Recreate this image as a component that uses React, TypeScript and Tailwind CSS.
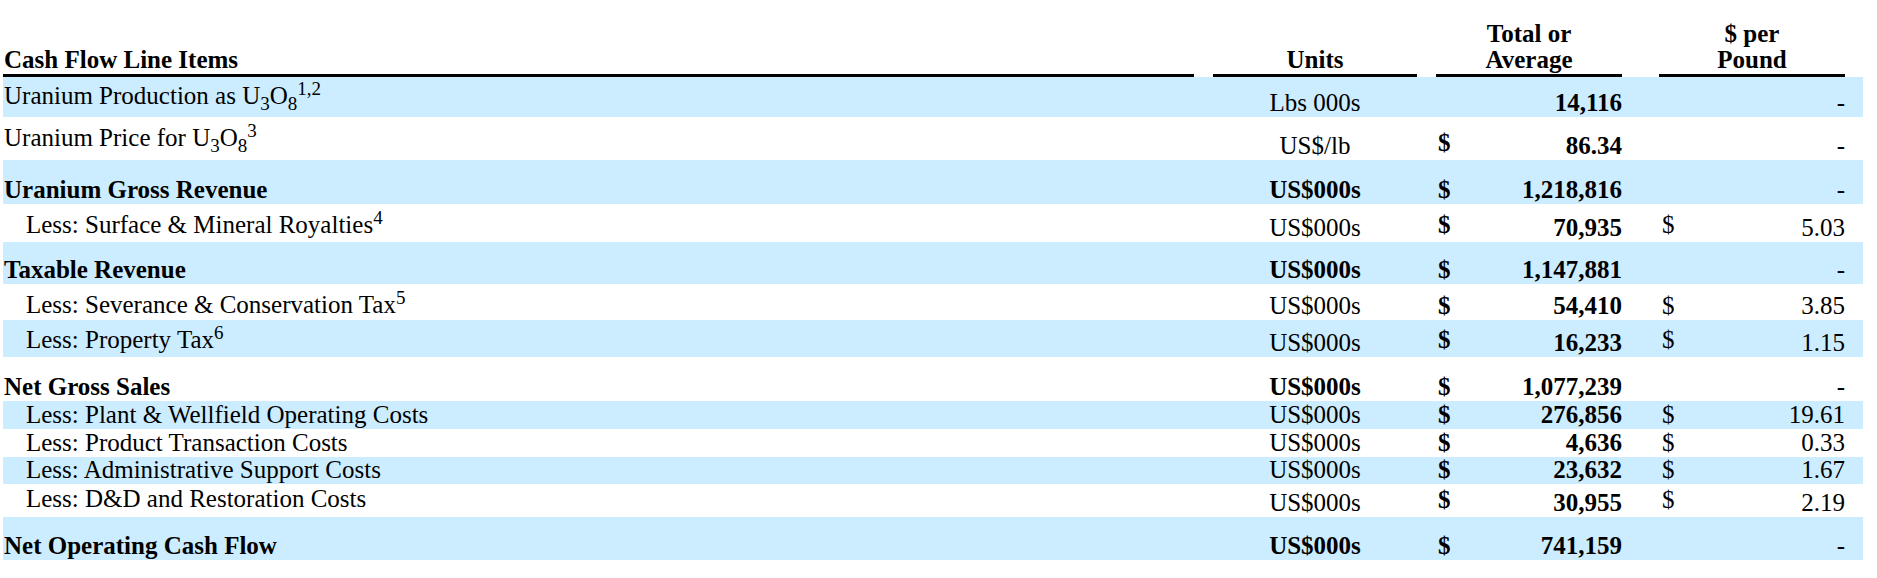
import type { ReactNode } from "react";

type Row = {
  label: ReactNode;
  units: string;
  total: string;
  dollar?: boolean;
  per: string;
  perDollar?: boolean;
  bold?: boolean;
  indent?: boolean;
  blue: boolean;
  h: string;
  lpb?: string;
  dpb?: string;
};

const Sub = ({ children }: { children: ReactNode }) => (
  <span className="relative top-[6px] text-[19px] leading-none">{children}</span>
);
const Sup = ({ children }: { children: ReactNode }) => (
  <span className="relative -top-[9px] text-[19px] leading-none">{children}</span>
);

const rows: Row[] = [
  {
    label: (
      <>
        Uranium Production as U<Sub>3</Sub>O<Sub>8</Sub>
        <Sup>1,2</Sup>
      </>
    ),
    units: "Lbs 000s",
    total: "14,116",
    per: "-",
    blue: true,
    h: "h-[40px]",
    lpb: "pb-[7px]",
  },
  {
    label: (
      <>
        Uranium Price for U<Sub>3</Sub>O<Sub>8</Sub>
        <Sup>3</Sup>
      </>
    ),
    units: "US$/lb",
    total: "86.34",
    dollar: true,
    per: "-",
    blue: false,
    h: "h-[43px]",
    lpb: "pb-[8px]",
    dpb: "pb-[3px]",
  },
  { label: "Uranium Gross Revenue", units: "US$000s", total: "1,218,816", dollar: true, per: "-", bold: true, blue: true, h: "h-[44px]" },
  {
    label: (
      <>
        Less: Surface &amp; Mineral Royalties<Sup>4</Sup>
      </>
    ),
    units: "US$000s",
    total: "70,935",
    dollar: true,
    per: "5.03",
    perDollar: true,
    indent: true,
    blue: false,
    h: "h-[38px]",
    lpb: "pb-[3px]",
    dpb: "pb-[3px]",
  },
  { label: "Taxable Revenue", units: "US$000s", total: "1,147,881", dollar: true, per: "-", bold: true, blue: true, h: "h-[42px]" },
  {
    label: (
      <>
        Less: Severance &amp; Conservation Tax<Sup>5</Sup>
      </>
    ),
    units: "US$000s",
    total: "54,410",
    dollar: true,
    per: "3.85",
    perDollar: true,
    indent: true,
    blue: false,
    h: "h-[36px]",
    lpb: "pb-[1px]",
  },
  {
    label: (
      <>
        Less: Property Tax<Sup>6</Sup>
      </>
    ),
    units: "US$000s",
    total: "16,233",
    dollar: true,
    per: "1.15",
    perDollar: true,
    indent: true,
    blue: true,
    h: "h-[37px]",
    lpb: "pb-[3px]",
    dpb: "pb-[3px]",
  },
  { label: "Net Gross Sales", units: "US$000s", total: "1,077,239", dollar: true, per: "-", bold: true, blue: false, h: "h-[44px]" },
  { label: "Less: Plant & Wellfield Operating Costs", units: "US$000s", total: "276,856", dollar: true, per: "19.61", perDollar: true, indent: true, blue: true, h: "h-[28px]" },
  { label: "Less: Product Transaction Costs", units: "US$000s", total: "4,636", dollar: true, per: "0.33", perDollar: true, indent: true, blue: false, h: "h-[28px]" },
  { label: "Less: Administrative Support Costs", units: "US$000s", total: "23,632", dollar: true, per: "1.67", perDollar: true, indent: true, blue: true, h: "h-[27px]" },
  {
    label: "Less: D&D and Restoration Costs",
    units: "US$000s",
    total: "30,955",
    dollar: true,
    per: "2.19",
    perDollar: true,
    indent: true,
    blue: false,
    h: "h-[33px]",
    lpb: "pb-[4px]",
    dpb: "pb-[3px]",
  },
  { label: "Net Operating Cash Flow", units: "US$000s", total: "741,159", dollar: true, per: "-", bold: true, blue: true, h: "h-[43px]" },
];

export default function App() {
  return (
    <div className="min-h-screen bg-white text-black font-['Liberation_Serif','Times_New_Roman',serif] text-[25px] leading-[28px]">
      <div className="ml-[3px] w-[1860px]">
        {/* header */}
        <div className="flex h-[77px] items-end font-bold leading-[26px]">
          <div className="w-[1210px] pr-[19px]">
            <div className="border-b-[3px] border-black pl-[1px] pb-[1px]">Cash Flow Line Items</div>
          </div>
          <div className="w-[223px] pr-[19px]">
            <div className="border-b-[3px] border-black pb-[1px] text-center">Units</div>
          </div>
          <div className="w-[223px] pr-[37px]">
            <div className="border-b-[3px] border-black pb-[1px] text-center">
              Total or
              <br />
              Average
            </div>
          </div>
          <div className="w-[204px] pr-[18px]">
            <div className="border-b-[3px] border-black pb-[1px] text-center">
              $ per
              <br />
              Pound
            </div>
          </div>
        </div>

        {rows.map((r, i) => (
          <div key={i} className={`flex items-end whitespace-nowrap ${r.h} ${r.blue ? "bg-[#ccecff]" : "bg-white"}`}>
            <div className={`w-[1210px] pr-[19px] ${r.indent ? "pl-[23px]" : "pl-[1px]"} ${r.bold ? "font-bold" : ""} ${r.lpb ?? ""}`}>
              {r.label}
            </div>
            <div className={`w-[223px] pr-[19px] text-center ${r.bold ? "font-bold" : ""}`}>{r.units}</div>
            <div className="w-[223px] pr-[37px] flex items-end justify-between font-bold">
              <span className={`pl-[2px] ${r.dpb ?? ""}`}>{r.dollar ? "$" : ""}</span>
              <span>{r.total}</span>
            </div>
            <div className="w-[204px] pr-[18px] flex items-end justify-between">
              <span className={`pl-[3px] ${r.dpb ?? ""}`}>{r.perDollar ? "$" : ""}</span>
              <span>{r.per}</span>
            </div>
          </div>
        ))}
      </div>
    </div>
  );
}
